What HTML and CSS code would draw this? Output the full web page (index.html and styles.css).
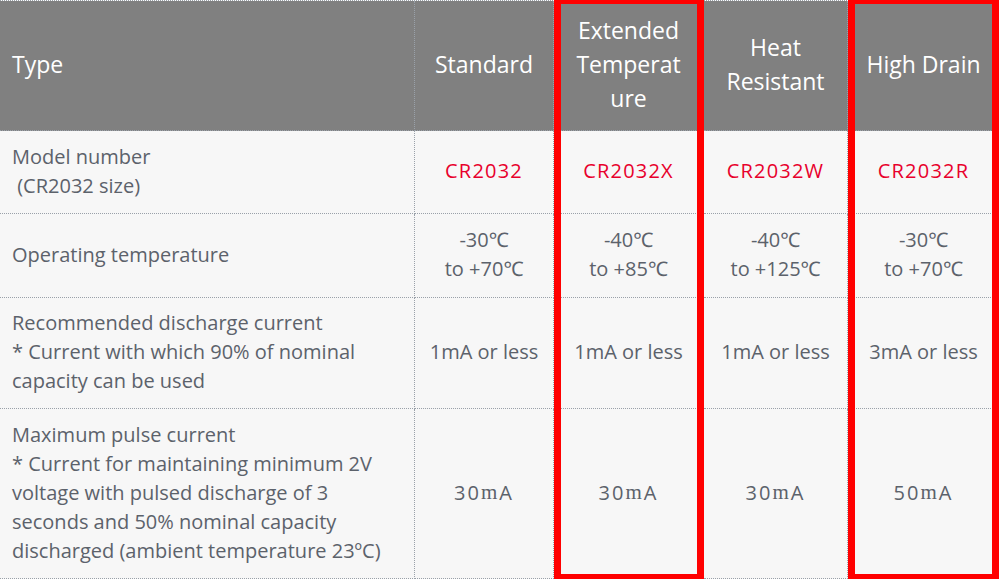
FILE: index.html
```html
<!DOCTYPE html>
<html lang="en">
<head>
<meta charset="utf-8">
<title>CR2032 types</title>
<link rel="stylesheet" href="styles.css">
</head>
<body>
<div class="wrap">
  <div class="spec">
    <div class="cell head first">Type</div>
    <div class="cell head">Standard</div>
    <div class="cell head">Extended<br>Temperat<br>ure</div>
    <div class="cell head">Heat<br>Resistant</div>
    <div class="cell head last">High Drain</div>

    <div class="cell first">Model number<br>&nbsp;(CR2032 size)</div>
    <div class="cell model">CR2032</div>
    <div class="cell model">CR2032X</div>
    <div class="cell model">CR2032W</div>
    <div class="cell model last">CR2032R</div>

    <div class="cell first">Operating temperature</div>
    <div class="cell">-30℃<br>to +70℃</div>
    <div class="cell">-40℃<br>to +85℃</div>
    <div class="cell">-40℃<br>to +125℃</div>
    <div class="cell last">-30℃<br>to +70℃</div>

    <div class="cell first">Recommended discharge current<br>* Current with which 90% of nominal<br>capacity can be used</div>
    <div class="cell">1mA or less</div>
    <div class="cell">1mA or less</div>
    <div class="cell">1mA or less</div>
    <div class="cell last">3mA or less</div>

    <div class="cell first">Maximum pulse current<br>* Current for maintaining minimum 2V<br>voltage with pulsed discharge of 3<br>seconds and 50% nominal capacity<br>discharged (ambient temperature 23ºC)</div>
    <div class="cell pulse">30<span class="unit">m</span>A</div>
    <div class="cell pulse">30<span class="unit">m</span>A</div>
    <div class="cell pulse">30<span class="unit">m</span>A</div>
    <div class="cell pulse last">50<span class="unit">m</span>A</div>
  </div>
  <div class="mark mark-ext"></div>
  <div class="mark mark-drain"></div>
</div>
</body>
</html>
```
FILE: styles.css
```css
html, body {
  margin: 0;
  padding: 0;
  background: #ffffff;
  overflow: hidden;
}
.wrap {
  position: relative;
  width: 999px;
  height: 579px;
  overflow: hidden;
}
.spec {
  display: grid;
  grid-template-columns: 415px 139px 150px 144px 151px;
  grid-template-rows: 130px 83px 84px 111px 170px;
  border-top: 1px dotted #9aa1a9;
  font-family: "Open Sans", "Noto Sans", sans-serif;
  font-size: 20px;
  line-height: 29px;
  color: #5c626b;
}
.cell {
  box-sizing: border-box;
  display: flex;
  align-items: center;
  justify-content: center;
  text-align: center;
  padding-bottom: 3px;
  background: #f7f7f7;
  border-bottom: 1px dotted #9aa1a9;
  border-right: 1px dotted #9aa1a9;
}
.cell.last {
  border-right: none;
}
.cell.first {
  justify-content: flex-start;
  text-align: left;
  padding-left: 12px;
}
.head {
  background: #808080;
  color: #ffffff;
  font-size: 23px;
  line-height: 34px;
}
.model {
  color: #e8002c;
  letter-spacing: 1.2px;
}
.pulse {
  letter-spacing: 2px;
}
.unit {
  font-family: "Liberation Serif", "DejaVu Serif", serif;
  font-size: 21px;
}
.mark {
  position: absolute;
  top: -3px;
  height: 584px;
  box-sizing: border-box;
  border: 7px solid #ff0000;
}
.mark-ext {
  left: 554px;
  width: 150px;
}
.mark-drain {
  left: 848px;
  width: 151px;
}
```
